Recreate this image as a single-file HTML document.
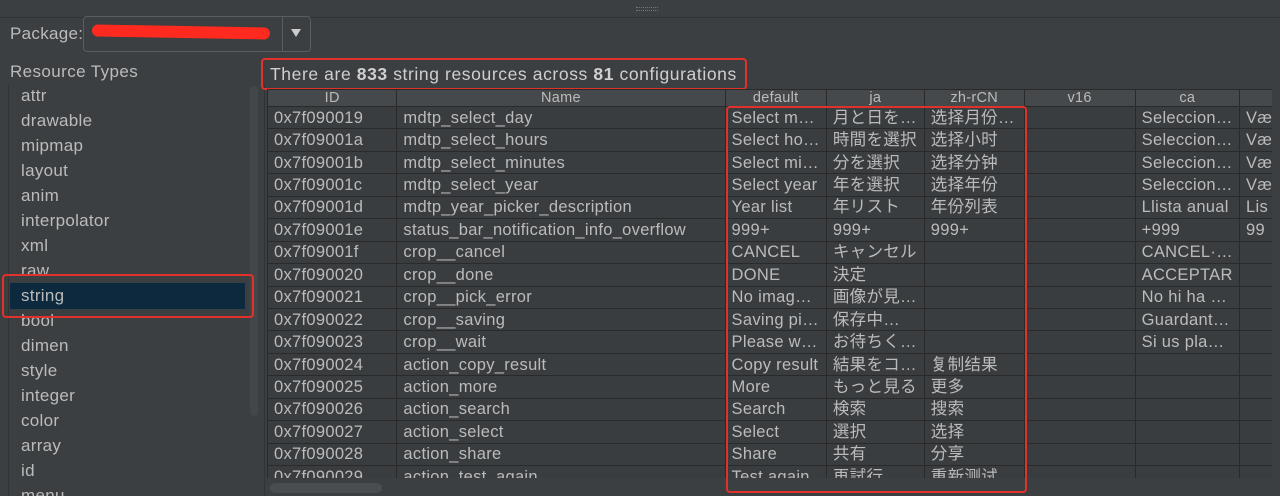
<!DOCTYPE html>
<html><head><meta charset="utf-8"><style>
*{margin:0;padding:0;box-sizing:border-box}
html,body{width:1280px;height:496px;overflow:hidden}
body{background:#3c3f41;font-family:"Liberation Sans","Noto Sans CJK JP",sans-serif;color:#bbbbbb;position:relative;font-size:15px}
.abs{position:absolute}
.li{position:absolute;left:21px;font-size:17px;letter-spacing:0.3px;line-height:20px}
table{border-collapse:collapse;table-layout:fixed;position:absolute;left:267px;top:89px}
tr{height:22.45px}
td,th{border:1px solid #2a2a2a;padding:0 6px;white-space:nowrap;overflow:hidden;font-weight:normal;text-align:left;font-size:16.5px;line-height:20px;height:22.45px;letter-spacing:0.3px}
th{height:17px;line-height:15px;background:#45494b;text-align:center;font-size:14.5px;color:#bbb;padding:0}
tr.h{height:17px}
td{background:#3a3d3f}
.red{position:absolute;border:2px solid #e0322b;border-radius:4px}
.wrap{position:absolute;left:265px;top:89px;width:1015px;height:389px;overflow:hidden}
.wrap table{left:2px;top:0}
</style></head><body>
<div class="abs" style="left:0;top:0;width:1280px;height:18px;background:#3c3f41;border-bottom:1px solid #323232"></div>
<div class="abs" style="left:636px;top:7px;width:22px;height:4px;border-top:1px dotted #777;border-bottom:1px dotted #777"></div>
<div class="abs" style="left:10px;top:24px;font-size:17px;letter-spacing:0.3px">Package:</div>
<div class="abs" style="left:83px;top:16px;width:228px;height:36px;border:1px solid #5a5d5f;border-radius:4px;background:#3c3f41"></div>
<div class="abs" style="left:282px;top:17px;width:1px;height:34px;background:#5a5d5f"></div>
<div class="abs" style="left:291px;top:29px;width:0;height:0;border-left:5px solid transparent;border-right:5px solid transparent;border-top:8px solid #ccc"></div>
<div class="abs" style="left:92px;top:26px;width:178px;height:12px;background:#ff2a1f;border-radius:6px;transform:rotate(1deg)"></div>
<div class="abs" style="left:10px;top:62px;font-size:17px;letter-spacing:0.4px">Resource Types</div>
<div class="abs" style="left:8px;top:84px;width:1px;height:412px;background:#333"></div>
<div class="abs" style="left:250px;top:86px;width:8px;height:330px;background:#444749;border-radius:4px"></div>
<div class="li" style="top:86px">attr</div>
<div class="li" style="top:111px">drawable</div>
<div class="li" style="top:136px">mipmap</div>
<div class="li" style="top:161px">layout</div>
<div class="li" style="top:186px">anim</div>
<div class="li" style="top:211px">interpolator</div>
<div class="li" style="top:236px">xml</div>
<div class="li" style="top:261px">raw</div>
<div class="abs" style="left:10px;top:283px;width:235px;height:26px;background:#0d293e"></div>
<div class="li" style="top:286px">string</div>
<div class="li" style="top:311px">bool</div>
<div class="li" style="top:336px">dimen</div>
<div class="li" style="top:361px">style</div>
<div class="li" style="top:386px">integer</div>
<div class="li" style="top:411px">color</div>
<div class="li" style="top:436px">array</div>
<div class="li" style="top:461px">id</div>
<div class="li" style="top:486px">menu</div>
<div class="red" style="left:2px;top:274px;width:252px;height:44px"></div>
<div class="abs" style="left:264px;top:84px;width:1px;height:412px;background:#333"></div>
<div class="abs" style="left:270px;top:64px;font-size:17.5px;letter-spacing:0.6px;color:#cfcfcf">There are <b>833</b> string resources across <b>81</b> configurations</div>
<div class="red" style="left:261px;top:58px;width:486px;height:32px"></div>
<div class="wrap">
<table>
<colgroup><col style="width:131px"><col style="width:330px"><col style="width:100px"><col style="width:98px"><col style="width:100px"><col style="width:116px"><col style="width:100px"><col style="width:40px"></colgroup>
<tr class="h"><th>ID</th><th>Name</th><th>default</th><th>ja</th><th>zh-rCN</th><th>v16</th><th>ca</th><th></th></tr>
<tr><td>0x7f090019</td><td>mdtp_select_day</td><td>Select m…</td><td>月と日を…</td><td>选择月份…</td><td></td><td>Seleccion…</td><td>Væ</td></tr>
<tr><td>0x7f09001a</td><td>mdtp_select_hours</td><td>Select ho…</td><td>時間を選択</td><td>选择小时</td><td></td><td>Seleccion…</td><td>Væ</td></tr>
<tr><td>0x7f09001b</td><td>mdtp_select_minutes</td><td>Select mi…</td><td>分を選択</td><td>选择分钟</td><td></td><td>Seleccion…</td><td>Væ</td></tr>
<tr><td>0x7f09001c</td><td>mdtp_select_year</td><td>Select year</td><td>年を選択</td><td>选择年份</td><td></td><td>Seleccion…</td><td>Væ</td></tr>
<tr><td>0x7f09001d</td><td>mdtp_year_picker_description</td><td>Year list</td><td>年リスト</td><td>年份列表</td><td></td><td>Llista anual</td><td>Lis</td></tr>
<tr><td>0x7f09001e</td><td>status_bar_notification_info_overflow</td><td>999+</td><td>999+</td><td>999+</td><td></td><td>+999</td><td>99</td></tr>
<tr><td>0x7f09001f</td><td>crop__cancel</td><td>CANCEL</td><td>キャンセル</td><td></td><td></td><td>CANCEL·…</td><td></td></tr>
<tr><td>0x7f090020</td><td>crop__done</td><td>DONE</td><td>決定</td><td></td><td></td><td>ACCEPTAR</td><td></td></tr>
<tr><td>0x7f090021</td><td>crop__pick_error</td><td>No imag…</td><td>画像が見…</td><td></td><td></td><td>No hi ha …</td><td></td></tr>
<tr><td>0x7f090022</td><td>crop__saving</td><td>Saving pi…</td><td>保存中…</td><td></td><td></td><td>Guardant…</td><td></td></tr>
<tr><td>0x7f090023</td><td>crop__wait</td><td>Please w…</td><td>お待ちく…</td><td></td><td></td><td>Si us pla…</td><td></td></tr>
<tr><td>0x7f090024</td><td>action_copy_result</td><td>Copy result</td><td>結果をコ…</td><td>复制结果</td><td></td><td></td><td></td></tr>
<tr><td>0x7f090025</td><td>action_more</td><td>More</td><td>もっと見る</td><td>更多</td><td></td><td></td><td></td></tr>
<tr><td>0x7f090026</td><td>action_search</td><td>Search</td><td>検索</td><td>搜索</td><td></td><td></td><td></td></tr>
<tr><td>0x7f090027</td><td>action_select</td><td>Select</td><td>選択</td><td>选择</td><td></td><td></td><td></td></tr>
<tr><td>0x7f090028</td><td>action_share</td><td>Share</td><td>共有</td><td>分享</td><td></td><td></td><td></td></tr>
<tr><td>0x7f090029</td><td>action_test_again</td><td>Test again</td><td>再試行</td><td>重新测试</td><td></td><td></td><td></td></tr>
</table>
</div>
<div class="abs" style="left:1272px;top:89px;width:8px;height:389px;background:#3c3f41"></div>
<div class="abs" style="left:270px;top:483px;width:112px;height:10px;background:#4a4d4f;border-radius:5px"></div>
<div class="red" style="left:726px;top:106px;width:301px;height:387px"></div>
</body></html>
